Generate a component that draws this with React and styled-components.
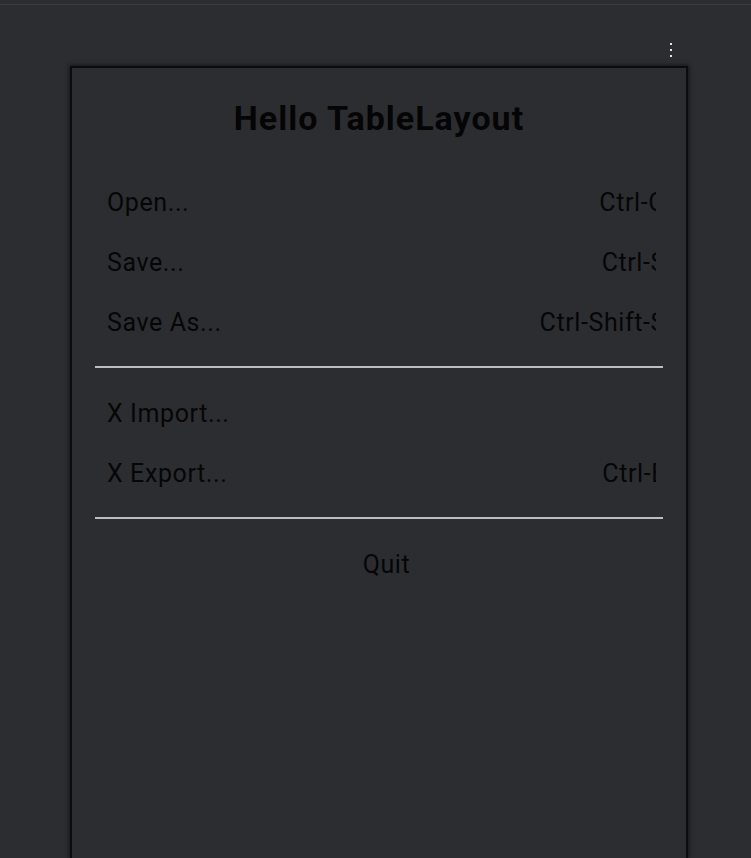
import React from 'react';
import styled, { createGlobalStyle } from 'styled-components';

const GlobalStyle = createGlobalStyle`
  html, body {
    margin: 0;
    padding: 0;
    background: #2c2d31;
    overflow: hidden;
  }
  body {
    font-family: Roboto, "Liberation Sans", sans-serif;
  }
`;

const Screen = styled.div`
  height: 858px;
  display: flex;
  flex-direction: column;
`;

const StatusEdge = styled.div`
  height: 4px;
  border-bottom: 1px solid #3b3c41;
`;

const ActionBar = styled.div`
  height: 61px;
  display: flex;
  justify-content: flex-end;
  align-items: flex-start;
  padding: 37px 78px 0 0;
  box-sizing: border-box;
`;

const MenuButton = styled.button`
  display: flex;
  background: none;
  border: 0;
  padding: 0;
  cursor: pointer;
`;

const Panel = styled.div`
  margin-left: 70px;
  width: 618px;
  flex: 1;
  box-sizing: border-box;
  border: 2px solid #0c0c0d;
  border-bottom: 0;
  box-shadow: 0 0 4px 1px rgba(0, 0, 0, 0.55);
  padding: 30px 23px 0;
  display: flex;
  flex-direction: column;
`;

const Title = styled.h1`
  margin: 0 0 34px;
  font-size: 34px;
  line-height: 40px;
  font-weight: 700;
  letter-spacing: 1px;
  text-align: center;
  color: #050505;
`;

const Row = styled.div`
  height: 60px;
  display: flex;
  align-items: center;
  justify-content: ${p => (p.$center ? 'center' : 'space-between')};
  padding: ${p => (p.$center ? '0 0 0 15px' : '0 7px 0 12px')};
  font-size: 25px;
  letter-spacing: 0.6px;
  color: #060606;
`;

const Label = styled.span`
  white-space: nowrap;
`;

const ShortcutClip = styled.span`
  flex: 1;
  display: flex;
  justify-content: flex-end;
  overflow: hidden;
`;

const Shortcut = styled.span`
  white-space: nowrap;
  margin-right: -10px;
`;

const Divider = styled.hr`
  margin: 14px 0 15px;
  height: 2px;
  border: 0;
  background: #bdbdbd;
`;

const DotsIcon = () => (
  <svg width="4" height="16" viewBox="0 0 4 16">
    <rect x="1" y="1" width="2" height="2" fill="#e6e6e6" />
    <rect x="1" y="7" width="2" height="2" fill="#e6e6e6" />
    <rect x="1" y="13" width="2" height="2" fill="#e6e6e6" />
  </svg>
);

const groups = [
  [
    { label: 'Open...', shortcut: 'Ctrl-O' },
    { label: 'Save...', shortcut: 'Ctrl-S' },
    { label: 'Save As...', shortcut: 'Ctrl-Shift-S' }
  ],
  [
    { label: 'X Import...', shortcut: '' },
    { label: 'X Export...', shortcut: 'Ctrl-E' }
  ]
];

const App = () => (
  <>
    <GlobalStyle />
    <Screen>
      <StatusEdge />
      <ActionBar>
        <MenuButton aria-label="More options">
          <DotsIcon />
        </MenuButton>
      </ActionBar>
      <Panel>
        <Title>Hello TableLayout</Title>
        {groups.map((group, i) => (
          <React.Fragment key={i}>
            {group.map(item => (
              <Row key={item.label}>
                <Label>{item.label}</Label>
                <ShortcutClip>
                  <Shortcut>{item.shortcut}</Shortcut>
                </ShortcutClip>
              </Row>
            ))}
            <Divider />
          </React.Fragment>
        ))}
        <Row $center>
          <Label>Quit</Label>
        </Row>
      </Panel>
    </Screen>
  </>
);

export default App;
